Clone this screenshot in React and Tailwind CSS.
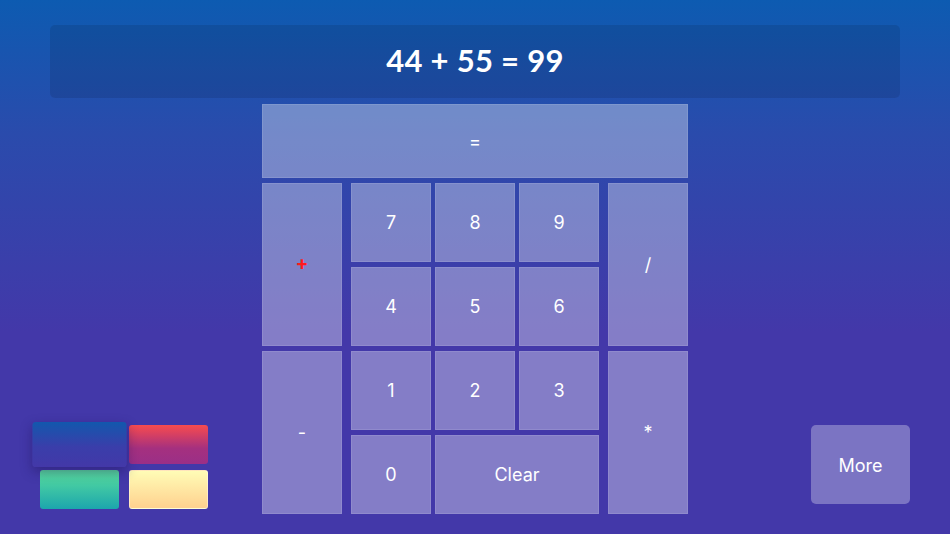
import React from "react";

const cell =
  "flex items-center justify-center bg-white/35 border border-white/10 text-white text-[18px] select-none";

export default function App() {
  return (
    <div
      className="w-[950px] h-[534px] overflow-hidden flex flex-col bg-[linear-gradient(180deg,#0d5bb1_0%,#2a4bac_25%,#4338a9_62%,#4338a9_100%)]"
      style={{ fontFamily: "Inter, 'Noto Sans', sans-serif" }}
    >
      <div className="mx-[50px] mt-[25px] h-[73px] rounded-[5px] bg-black/10 flex items-center justify-center">
        <span
          className="text-white text-[31px] font-bold tracking-[0.3px] leading-none pb-[2px]"
          style={{ fontFamily: "Lato, 'Noto Sans', sans-serif" }}
        >
          44 + 55 = 99
        </span>
      </div>

      <div className="mt-[6px] grid grid-cols-[1fr_426px_1fr] items-end">
        <div className="pl-[40px] mb-[25px]">
          <div className="grid grid-cols-[79px_79px] grid-rows-[39px_39px] gap-x-[10px] gap-y-[6px]">
            <div className="rounded-[3px] scale-x-[1.19] scale-y-[1.16] bg-[linear-gradient(180deg,#1258ad_0%,#3a3eaa_55%,#4338a8_100%)] shadow-[0_4px_10px_rgba(30,20,90,0.45)]" />
            <div className="rounded-[3px] bg-[linear-gradient(180deg,#f84b4e_0%,#a5307f_60%,#9b2f87_100%)]" />
            <div className="rounded-[3px] bg-[linear-gradient(180deg,#5be09d_0%,#1ca6ad_100%)]" />
            <div className="rounded-[3px] border border-white/40 bg-[linear-gradient(180deg,#fffcb6_0%,#ffd18f_100%)]" />
          </div>
        </div>

        <div className="flex flex-col gap-[5px] mb-[20px]">
          <div className={`${cell} h-[74px] bg-white/35`}>=</div>
          <div className="flex gap-[9px] h-[331px]">
            <div className="w-[80px] flex flex-col gap-[5px]">
              <div className={`${cell} flex-1`}>
                <span className="text-[#ff1a1a] text-[19px] font-bold">+</span>
              </div>
              <div className={`${cell} flex-1`}>-</div>
            </div>
            <div className="w-[248px] grid grid-cols-3 grid-rows-4 gap-x-[4px] gap-y-[5px]">
              <div className={cell}>7</div>
              <div className={cell}>8</div>
              <div className={cell}>9</div>
              <div className={cell}>4</div>
              <div className={cell}>5</div>
              <div className={cell}>6</div>
              <div className={cell}>1</div>
              <div className={cell}>2</div>
              <div className={cell}>3</div>
              <div className={cell}>0</div>
              <div className={`${cell} col-span-2`}>Clear</div>
            </div>
            <div className="w-[80px] flex flex-col gap-[5px]">
              <div className={`${cell} flex-1`}>/</div>
              <div className={`${cell} flex-1 text-[14px]`}>*</div>
            </div>
          </div>
        </div>

        <div className="flex justify-end pr-[40px] mb-[30px]">
          <div className="w-[99px] h-[79px] rounded-[5px] bg-white/30 flex items-center justify-center text-white text-[18px] pt-[1px]">
            More
          </div>
        </div>
      </div>
    </div>
  );
}
